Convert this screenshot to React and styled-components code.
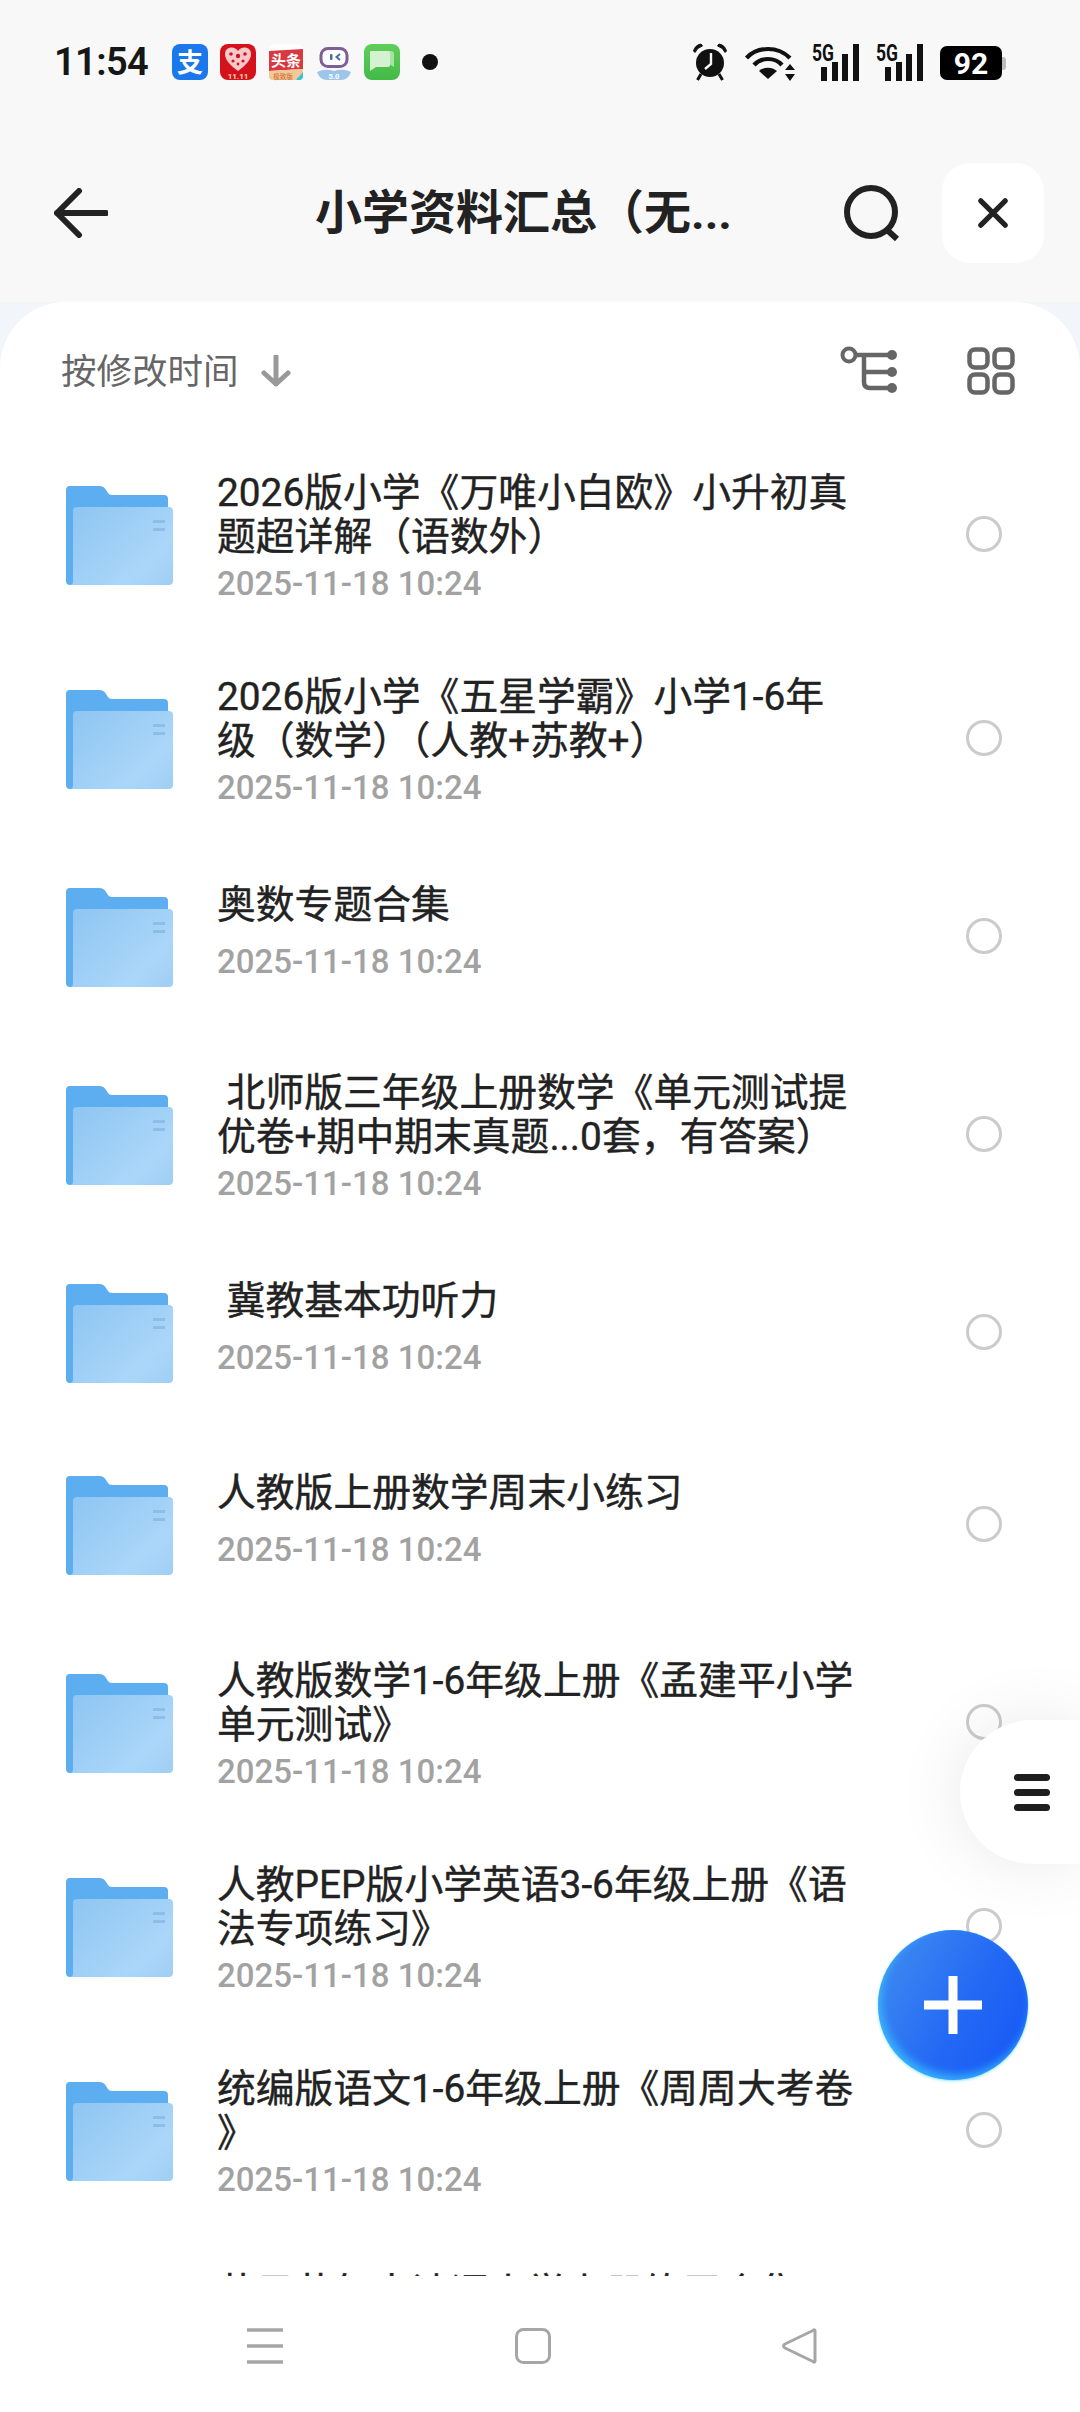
import React from "react";
import styled, { createGlobalStyle } from "styled-components";

const GlobalStyle = createGlobalStyle`
  html, body {
    margin: 0;
    padding: 0;
    background: #fff;
    font-family: Roboto, "Noto Sans CJK SC", sans-serif;
  }
`;

const folders = [
  { lines: ["2026版小学《万唯小白欧》小升初真", "题超详解（语数外）"] },
  { lines: ["2026版小学《五星学霸》小学1-6年", "级（数学）（人教+苏教+）"] },
  { lines: ["奥数专题合集"] },
  { lines: [" 北师版三年级上册数学《单元测试提", "优卷+期中期末真题...0套，有答案）"] },
  { lines: [" 冀教基本功听力"] },
  { lines: ["人教版上册数学周末小练习"] },
  { lines: ["人教版数学1-6年级上册《孟建平小学", "单元测试》"] },
  { lines: ["人教PEP版小学英语3-6年级上册《语", "法专项练习》"] },
  { lines: ["统编版语文1-6年级上册《周周大考卷", "》"] },
  { lines: ["节日节气古诗词小学上册练习合集", "（语文）"] },
];

const Page = styled.div`
  position: relative;
  display: flex;
  flex-direction: column;
  width: 1080px;
  height: 2412px;
  overflow: hidden;
  background: linear-gradient(#f8f8f8 302px, #f2f5f9 302px);
`;

const StatusBar = styled.div`
  display: flex;
  align-items: center;
  justify-content: space-between;
  flex: none;
  height: 124px;
  padding: 0 74px 0 54px;
`;

const StatusGroup = styled.div`
  display: flex;
  align-items: center;
`;

const Clock = styled.span`
  width: 118px;
  font-size: 38px;
  font-weight: 600;
  letter-spacing: -0.6px;
  color: #161616;
`;

const AppIcons = styled.div`
  display: flex;
  align-items: center;
  gap: 12px;
`;

const NotifyDot = styled.span`
  width: 16px;
  height: 16px;
  margin-left: 22px;
  border-radius: 50%;
  background: #111;
`;

const SystemIcons = styled.div`
  display: flex;
  align-items: center;
  gap: 17px;
`;

const StatusSvg = styled.svg`
  flex: none;
  overflow: visible;
`;

const Battery = styled.div`
  position: relative;
  display: flex;
  align-items: center;
  justify-content: center;
  width: 62px;
  height: 34px;
  margin: 2px 4px 0 0;
  border-radius: 7px;
  background: #000;
  color: #fff;
  font-size: 30px;
  font-weight: 700;

  &::after {
    content: "";
    position: absolute;
    right: -4px;
    top: 11px;
    width: 4px;
    height: 13px;
    border-radius: 0 3px 3px 0;
    background: #bdbdbd;
  }
`;

const Header = styled.div`
  display: flex;
  align-items: center;
  flex: none;
  height: 178px;
  padding: 0 36px 0 54px;
`;

const Title = styled.h1`
  margin: 0 0 0 207px;
  font-size: 47px;
  line-height: 60px;
  font-weight: 700;
  color: #222;
  white-space: nowrap;
`;

const SearchButton = styled.div`
  display: flex;
  margin-left: auto;
`;

const CloseButton = styled.div`
  display: flex;
  align-items: center;
  justify-content: center;
  width: 102px;
  height: 100px;
  margin-left: 42px;
  border-radius: 28px;
  background: #fff;
`;

const Sheet = styled.div`
  display: flex;
  flex-direction: column;
  flex: 1;
  min-height: 0;
  overflow: hidden;
  border-radius: 66px 66px 0 0;
  background: #fff;
`;

const SortRow = styled.div`
  display: flex;
  align-items: center;
  flex: none;
  box-sizing: border-box;
  height: 130px;
  padding: 8px 65px 0 61px;
`;

const SortLabel = styled.span`
  margin-bottom: 5px;
  font-size: 35.5px;
  color: #666;
`;

const SortArrow = styled.div`
  display: flex;
  margin-left: 22px;
`;

const ViewTools = styled.div`
  display: flex;
  align-items: center;
  gap: 69px;
  margin-left: auto;
`;

const List = styled.div`
  flex: 1;
  min-height: 0;
  overflow: hidden;
`;

const Row = styled.div`
  display: flex;
  align-items: center;
  box-sizing: border-box;
  height: ${(p) => (p.$single ? "192px" : "204px")};
  padding: 0 78px 0 66px;
`;

const RowText = styled.div`
  flex: 1;
  margin-left: 43px;
  padding-top: ${(p) => (p.$single ? "0" : "3px")};
  padding-bottom: ${(p) => (p.$single ? "10px" : "0")};
`;

const RowTitle = styled.div`
  margin-bottom: ${(p) => (p.$single ? "18px" : "8px")};
  font-size: 38.8px;
  line-height: 44px;
  color: #222;
  -webkit-text-stroke: 0.4px #222;
  white-space: pre;
`;

const RowDate = styled.div`
  font-size: 33px;
  line-height: 34px;
  font-weight: 500;
  color: #a2a2a2;
`;

const Radio = styled.span`
  flex: none;
  box-sizing: border-box;
  width: 36px;
  height: 36px;
  border: 3px solid #cbcbcb;
  border-radius: 50%;
`;

const FolderSvg = styled.svg`
  flex: none;
  margin-top: 3px;
`;

const NavBar = styled.div`
  display: flex;
  align-items: center;
  justify-content: space-between;
  flex: none;
  box-sizing: border-box;
  height: 136px;
  padding: 3px 263px 0 247px;
  background: #fff;
`;

const MenuPill = styled.div`
  position: absolute;
  right: 0;
  top: 1720px;
  display: flex;
  flex-direction: column;
  justify-content: center;
  gap: 8px;
  box-sizing: border-box;
  width: 120px;
  height: 144px;
  padding-left: 54px;
  border-radius: 72px 0 0 72px;
  background: #fff;
  box-shadow: 0 0 70px rgba(0, 0, 0, 0.09);
`;

const MenuBar = styled.span`
  width: 36px;
  height: 7px;
  border-radius: 4px;
  background: #1e1e1e;
`;

const Fab = styled.div`
  position: absolute;
  left: 878px;
  top: 1930px;
  display: flex;
  align-items: center;
  justify-content: center;
  width: 150px;
  height: 150px;
  border-radius: 50%;
  background: linear-gradient(120deg, #3c89f1 10%, #2469f4 55%, #1455f6 100%);
  box-shadow: inset 3px -5px 8px rgba(60, 205, 255, 0.7), 0 1px 3px rgba(110, 225, 255, 0.9);
`;

const AlipayIcon = () => (
  <StatusSvg width="36" height="36" viewBox="0 0 36 36">
    <rect width="36" height="36" rx="8" fill="#1a77ec" />
    <text x="18" y="28" textAnchor="middle" fontSize="26" fontWeight="700" fill="#fff" fontFamily="Noto Sans CJK SC">支</text>
  </StatusSvg>
);

const PddIcon = () => (
  <StatusSvg width="36" height="36" viewBox="0 0 36 36">
    <rect width="36" height="36" rx="8" fill="#d5121c" />
    <path d="M18 27 C10 21 5 16 5 10 C5 5.500 8.500 3.500 11.500 3.500 C14.500 3.500 16.500 5 18 7 C19.500 5 21.500 3.500 24.500 3.500 C27.500 3.500 31 5.500 31 10 C31 16 26 21 18 27 Z" fill="#f8c9cb" />
    <g fill="#d5121c">
      <circle cx="11" cy="10" r="1.800" />
      <circle cx="18" cy="12" r="2.200" />
      <circle cx="25" cy="10" r="1.800" />
      <circle cx="13" cy="17" r="1.600" />
      <circle cx="23" cy="17" r="1.600" />
      <circle cx="18" cy="20" r="1.400" />
    </g>
    <text x="18" y="34.500" textAnchor="middle" fontSize="8" fontWeight="700" fill="#fbdcb8" fontFamily="Roboto">11.11</text>
  </StatusSvg>
);

const ToutiaoIcon = () => (
  <StatusSvg width="36" height="36" viewBox="0 0 36 36">
    <rect width="36" height="36" rx="7" fill="#fdfdfd" />
    <path d="M1 7 L35 5 V25 L1 27 Z" fill="#d9383f" />
    <text x="18" y="22" textAnchor="middle" fontSize="15" fontWeight="700" fill="#fff" fontFamily="Noto Sans CJK SC">头条</text>
    <path d="M1 27 L35 25 V32 Q35 36 31 36 H5 Q1 36 1 32 Z" fill="#f3c897" />
    <text x="15" y="34.500" textAnchor="middle" fontSize="6.500" fill="#c9632f" fontFamily="Noto Sans CJK SC">极致版</text>
    <path d="M28 36 L35 28 V32 Q35 36 31 36 Z" fill="#32c3d6" />
  </StatusSvg>
);

const RobotIcon = () => (
  <StatusSvg width="36" height="36" viewBox="0 0 36 36">
    <rect x="5" y="4.500" width="26" height="18" rx="7" fill="#fff" stroke="#7d5f95" strokeWidth="3" />
    <rect x="14" y="10" width="2.500" height="6" rx="1" fill="#4b6ca8" />
    <path d="M24 10 L20.500 13 L24 16" fill="none" stroke="#4b6ca8" strokeWidth="2" />
    <path d="M1 28 Q9 24 18 27 Q27 24 35 28 Q32 36 25 36 H11 Q4 36 1 28 Z" fill="#9cc5ea" />
    <text x="18" y="34.500" textAnchor="middle" fontSize="7.500" fontWeight="700" fill="#fff" fontFamily="Roboto">5.0</text>
  </StatusSvg>
);

const MessageIcon = () => (
  <StatusSvg width="36" height="36" viewBox="0 0 36 36">
    <defs>
      <linearGradient id="msgGreen" x1="0" y1="0" x2="0" y2="1">
        <stop offset="0" stopColor="#5fcf5a" />
        <stop offset="1" stopColor="#44b947" />
      </linearGradient>
    </defs>
    <rect width="36" height="36" rx="8" fill="url(#msgGreen)" />
    <path d="M10 7 H27 Q30 7 30 10 V23 L25 20 V12 H10 Z" fill="#a7e3a3" />
    <path d="M7 7 H24 Q26 7 26 9 V21 Q26 23 24 23 H12 L6 27 V8 Q6 7 7 7 Z" fill="#d4f2d0" />
  </StatusSvg>
);

const AlarmIcon = () => (
  <StatusSvg width="36" height="38" viewBox="0 0 36 38">
    <circle cx="18" cy="20" r="14" fill="#111" />
    <path d="M1.500 8 Q3 2 9 1 L10.500 3 Q5 4.500 3 9.500 Z" fill="#111" stroke="#111" />
    <path d="M34.500 8 Q33 2 27 1 L25.500 3 Q31 4.500 33 9.500 Z" fill="#111" stroke="#111" />
    <path d="M9 31 L5.500 37 M27 31 L30.500 37" stroke="#111" strokeWidth="3" />
    <path d="M19 10 V21 L13 26" fill="none" stroke="#f8f8f8" strokeWidth="2.400" />
  </StatusSvg>
);

const WifiIcon = () => (
  <StatusSvg width="50" height="38" viewBox="0 0 50 38">
    <g fill="none" stroke="#111" strokeWidth="4.200">
      <path d="M1.500 15 C13 3 33 3 45 15" />
      <path d="M9 22 C16 14 30 14 37 22" />
    </g>
    <path d="M23 36 L14 28 C19 23.500 27 23.500 32 28 Z" fill="#111" />
    <path d="M45 21 L50 27 H40 Z M45 38 L50 31 H40 Z" fill="#111" />
  </StatusSvg>
);

const SignalIcon = () => (
  <StatusSvg width="47" height="37" viewBox="0 0 47 37">
    <text x="0" y="16.500" fontSize="23" fontWeight="700" textLength="22" lengthAdjust="spacingAndGlyphs" fill="#111" fontFamily="Roboto">5G</text>
    <rect x="9" y="23" width="6" height="14" fill="#111" />
    <rect x="20" y="18" width="6" height="19" fill="#111" />
    <rect x="30" y="10" width="6" height="27" fill="#111" />
    <rect x="41" y="0" width="6" height="37" fill="#111" />
  </StatusSvg>
);

const BackArrow = () => (
  <svg width="54" height="50" viewBox="0 0 54 50">
    <path d="M25 3 L3 25 L25 47 M3 25 H52" fill="none" stroke="#222" strokeWidth="6" strokeLinecap="round" strokeLinejoin="round" />
  </svg>
);

const SearchIcon = () => (
  <svg width="56" height="56" viewBox="0 0 56 56">
    <circle cx="27" cy="27" r="24" fill="none" stroke="#222" strokeWidth="6" />
    <path d="M42 44 L53 54" stroke="#222" strokeWidth="6" />
  </svg>
);

const CloseIcon = () => (
  <svg width="30" height="30" viewBox="0 0 32 32">
    <path d="M3 3 L29 29 M29 3 L3 29" stroke="#222" strokeWidth="5.500" strokeLinecap="round" />
  </svg>
);

const DownArrow = () => (
  <svg width="30" height="32" viewBox="0 0 30 32">
    <path d="M15 1 V29 M3 18 L15 29 L27 18" fill="none" stroke="#999" strokeWidth="5" strokeLinejoin="round" strokeLinecap="round" />
  </svg>
);

const TreeIcon = () => (
  <svg width="58" height="50" viewBox="0 0 58 50">
    <circle cx="9" cy="9" r="6.500" fill="none" stroke="#666" strokeWidth="4" />
    <path d="M15 9 H52 M24 9 V36 Q24 42 30 42 H52 M24 26 H52" fill="none" stroke="#666" strokeWidth="4.500" />
    <circle cx="52" cy="9" r="5" fill="#666" />
    <circle cx="52" cy="26" r="5" fill="#666" />
    <circle cx="52" cy="42" r="5" fill="#666" />
  </svg>
);

const GridIcon = () => (
  <svg width="48" height="48" viewBox="0 0 48 48">
    <g fill="none" stroke="#666" strokeWidth="4.500">
      <rect x="2.500" y="2.500" width="18" height="18" rx="5.500" />
      <rect x="27.500" y="2.500" width="18" height="18" rx="5.500" />
      <rect x="2.500" y="27.500" width="18" height="18" rx="5.500" />
      <rect x="27.500" y="27.500" width="18" height="18" rx="5.500" />
    </g>
  </svg>
);

const FolderIcon = ({ id }) => (
  <FolderSvg width="108" height="100" viewBox="0 0 108 100">
    <defs>
      <linearGradient id={id} x1="0" y1="0.1" x2="1" y2="0.9">
        <stop offset="0" stopColor="#8fc6f2" />
        <stop offset="0.75" stopColor="#aad6f9" />
        <stop offset="1" stopColor="#a2d0f5" />
      </linearGradient>
    </defs>
    <path d="M0 4 Q0 0 4 0 H33 Q38 0 40 4 L42 7 Q43 9 46 9 H98 Q102 9 102 13 V60 H8 V96 Q8 99 5 99 H4 Q0 99 0 95 Z" fill="#5caef0" />
    <path d="M7 25 Q7 21 11 21 H103 Q107 21 107 25 V95 Q107 99 103 99 H4 Q7 99 7 95 Z" fill={`url(#${id})`} />
    <rect x="87" y="34" width="12" height="3" fill="#8ebde8" />
    <rect x="87" y="42" width="12" height="3" fill="#8ebde8" />
  </FolderSvg>
);

const NavMenu = () => (
  <svg width="36" height="36" viewBox="0 0 36 36">
    <path d="M0 2 H36 M0 18 H36 M0 34 H36" stroke="#a6a6a6" strokeWidth="3.500" />
  </svg>
);

const NavHome = () => (
  <svg width="36" height="36" viewBox="0 0 36 36">
    <rect x="1.500" y="1.500" width="33" height="33" rx="7" fill="none" stroke="#a6a6a6" strokeWidth="3" />
  </svg>
);

const NavBack = () => (
  <svg width="35" height="36" viewBox="0 0 35 36">
    <path d="M33 3 V33 Q33 35 31 33.500 L3 20 Q0 18 3 16 L31 2.500 Q33 1 33 3 Z" fill="none" stroke="#a6a6a6" strokeWidth="3" strokeLinejoin="round" />
  </svg>
);

const App = () => {
  return (
    <Page>
      <GlobalStyle />
      <StatusBar>
        <StatusGroup>
          <Clock>11:54</Clock>
          <AppIcons>
            <AlipayIcon />
            <PddIcon />
            <ToutiaoIcon />
            <RobotIcon />
            <MessageIcon />
          </AppIcons>
          <NotifyDot />
        </StatusGroup>
        <SystemIcons>
          <AlarmIcon />
          <WifiIcon />
          <SignalIcon />
          <SignalIcon />
          <Battery>92</Battery>
        </SystemIcons>
      </StatusBar>

      <Header>
        <BackArrow />
        <Title>小学资料汇总（无...</Title>
        <SearchButton>
          <SearchIcon />
        </SearchButton>
        <CloseButton>
          <CloseIcon />
        </CloseButton>
      </Header>

      <Sheet>
        <SortRow>
          <SortLabel>按修改时间</SortLabel>
          <SortArrow>
            <DownArrow />
          </SortArrow>
          <ViewTools>
            <TreeIcon />
            <GridIcon />
          </ViewTools>
        </SortRow>
        <List>
          {folders.map((f, index) => {
            const single = f.lines.length === 1;
            return (
              <Row key={index} $single={single}>
                <FolderIcon id={`folder-${index}`} />
                <RowText $single={single}>
                  <RowTitle $single={single}>{f.lines.join("\n")}</RowTitle>
                  <RowDate>2025-11-18 10:24</RowDate>
                </RowText>
                <Radio />
              </Row>
            );
          })}
        </List>
      </Sheet>

      <NavBar>
        <NavMenu />
        <NavHome />
        <NavBack />
      </NavBar>

      <MenuPill>
        <MenuBar />
        <MenuBar />
        <MenuBar />
      </MenuPill>
      <Fab>
        <svg width="58" height="58" viewBox="0 0 58 58">
          <path d="M29 0 V58 M0 29 H58" stroke="#fff" strokeWidth="9" />
        </svg>
      </Fab>
    </Page>
  );
};

export default App;
